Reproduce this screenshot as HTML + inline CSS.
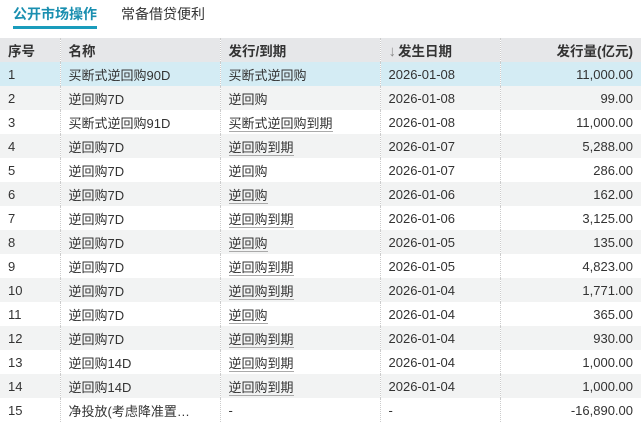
<!DOCTYPE html>
<html><head><meta charset="utf-8"><style>
body{margin:0;width:641px;height:425px;overflow:hidden;background:#fff;font-family:"Liberation Sans","Noto Sans CJK SC",sans-serif;font-size:13px;color:#333}
.tabs{height:38px;position:relative}
.tab{position:absolute;top:4px;font-size:14px}
.t1{left:13px;color:#1a8fb0;font-weight:bold}
.t1:after{content:"";position:absolute;left:0;right:0;top:22px;height:3px;background:#1a9cbc}
.t2{left:121px;color:#333}
table{border-collapse:collapse;width:641px;table-layout:fixed}
td,th{height:24px;padding:0 0 0 8px;white-space:nowrap;overflow:hidden;text-overflow:ellipsis;border-left:1px dotted #ccc}
td:first-child,th:first-child{border-left:none}
th{background:#e6e7e9;text-align:left;font-weight:bold;font-size:13.5px}
tr:nth-child(odd) td{background:#f2f3f3}
tr.sel td{background:#d4ecf4}
.r{text-align:right;padding-right:8px}
u{text-decoration:none;border-bottom:1px solid #aaa}
.ar{color:#888;font-weight:normal;font-size:15px;margin-right:2px}
</style></head><body>
<div class="tabs"><span class="tab t1">公开市场操作</span><span class="tab t2">常备借贷便利</span></div>
<table>
<colgroup><col style="width:60px"><col style="width:160px"><col style="width:160px"><col style="width:120px"><col style="width:141px"></colgroup>
<tr><th>序号</th><th>名称</th><th>发行/到期</th><th><span class="ar">↓</span>发生日期</th><th class="r">发行量(亿元)</th></tr>
<tr class="sel"><td>1</td><td>买断式逆回购90D</td><td>买断式逆回购</td><td>2026-01-08</td><td class="r">11,000.00</td></tr>
<tr><td>2</td><td>逆回购7D</td><td>逆回购</td><td>2026-01-08</td><td class="r">99.00</td></tr>
<tr><td>3</td><td>买断式逆回购91D</td><td><u>买断式逆回购到期</u></td><td>2026-01-08</td><td class="r">11,000.00</td></tr>
<tr><td>4</td><td>逆回购7D</td><td><u>逆回购到期</u></td><td>2026-01-07</td><td class="r">5,288.00</td></tr>
<tr><td>5</td><td>逆回购7D</td><td>逆回购</td><td>2026-01-07</td><td class="r">286.00</td></tr>
<tr><td>6</td><td>逆回购7D</td><td><u>逆回购</u></td><td>2026-01-06</td><td class="r">162.00</td></tr>
<tr><td>7</td><td>逆回购7D</td><td><u>逆回购到期</u></td><td>2026-01-06</td><td class="r">3,125.00</td></tr>
<tr><td>8</td><td>逆回购7D</td><td><u>逆回购</u></td><td>2026-01-05</td><td class="r">135.00</td></tr>
<tr><td>9</td><td>逆回购7D</td><td><u>逆回购到期</u></td><td>2026-01-05</td><td class="r">4,823.00</td></tr>
<tr><td>10</td><td>逆回购7D</td><td><u>逆回购到期</u></td><td>2026-01-04</td><td class="r">1,771.00</td></tr>
<tr><td>11</td><td>逆回购7D</td><td><u>逆回购</u></td><td>2026-01-04</td><td class="r">365.00</td></tr>
<tr><td>12</td><td>逆回购7D</td><td><u>逆回购到期</u></td><td>2026-01-04</td><td class="r">930.00</td></tr>
<tr><td>13</td><td>逆回购14D</td><td><u>逆回购到期</u></td><td>2026-01-04</td><td class="r">1,000.00</td></tr>
<tr><td>14</td><td>逆回购14D</td><td><u>逆回购到期</u></td><td>2026-01-04</td><td class="r">1,000.00</td></tr>
<tr><td>15</td><td>净投放(考虑降准置…</td><td>-</td><td>-</td><td class="r">-16,890.00</td></tr>
</table>
</body></html>
